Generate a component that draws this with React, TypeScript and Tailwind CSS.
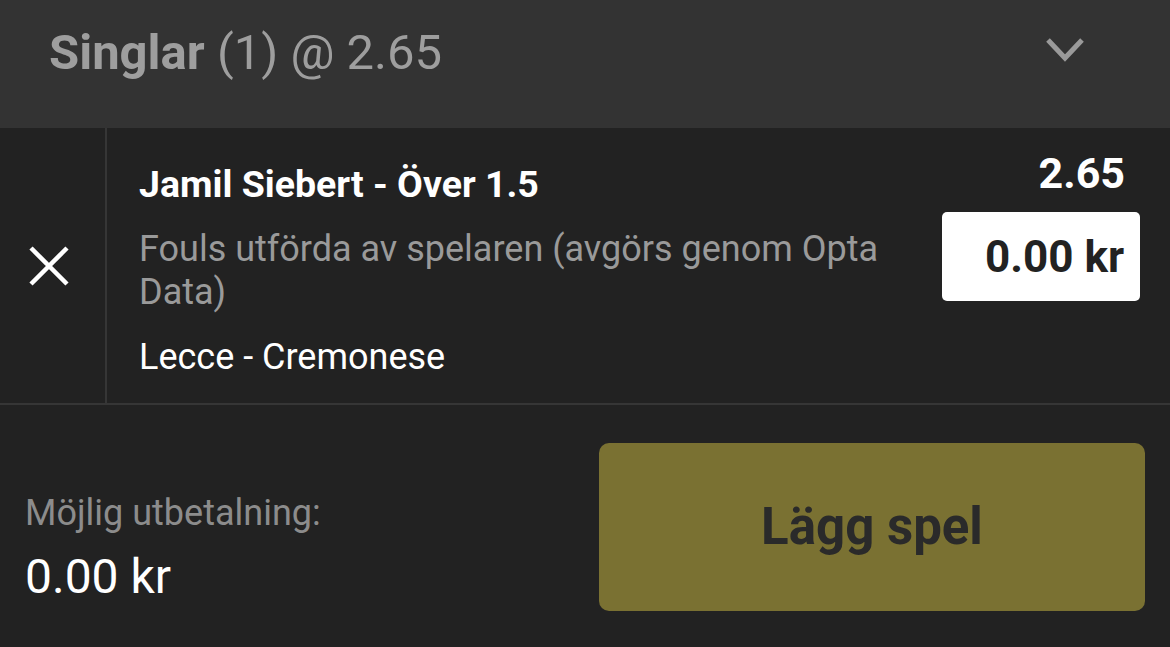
import React from "react";

export default function App() {
  return (
    <div className="w-[1170px] h-[647px] bg-[#222222] overflow-hidden flex flex-col" style={{ fontFamily: "Roboto, 'Noto Sans', sans-serif" }}>
      {/* Header */}
      <div className="h-[128px] shrink-0 bg-[#333333] flex items-start justify-between pl-[49px] pr-[85px] pt-[25px]">
        <div className="text-[49px] leading-[56px] text-[#9e9e9e]">
          <span className="font-bold">Singlar</span> (1) @ 2.65
        </div>
        <svg width="40" height="28" viewBox="0 0 40 28" className="mt-[11px]">
          <polyline points="3,4 20,22 37,4" fill="none" stroke="#9a9a9a" strokeWidth="5" />
        </svg>
      </div>

      {/* Bet row */}
      <div className="h-[277px] shrink-0 flex border-b-2 border-[#363636]">
        <div className="w-[107px] shrink-0 border-r-2 border-[#363636] flex items-center justify-center pr-[8px]">
          <svg width="40" height="40" viewBox="0 0 40 40">
            <line x1="2" y1="2" x2="38" y2="38" stroke="#ffffff" strokeWidth="4.5" />
            <line x1="38" y1="2" x2="2" y2="38" stroke="#ffffff" strokeWidth="4.5" />
          </svg>
        </div>
        <div className="flex-1 flex pl-[32px] pr-[30px]">
          <div className="flex-1 flex flex-col pt-[35px]">
            <div className="text-[37.5px] leading-[42px] font-bold text-white">Jamil Siebert - Över 1.5</div>
            <div className="mt-[23px] text-[36px] leading-[43px] text-[#9a9a9a] max-w-[760px]">
              Fouls utförda av spelaren (avgörs genom Opta Data)
            </div>
            <div className="mt-[22px] text-[36px] leading-[42px] text-white">Lecce - Cremonese</div>
          </div>
          <div className="flex flex-col items-end pt-[20px]">
            <div className="text-[43px] leading-[50px] font-bold text-white pr-[15px]">2.65</div>
            <div className="mt-[14px] w-[198px] h-[89px] bg-white rounded-[5px] flex items-center justify-end pr-[16px]">
              <span className="text-[44px] font-bold text-[#222222]">0.00 kr</span>
            </div>
          </div>
        </div>
      </div>

      {/* Footer */}
      <div className="flex-1 flex items-start justify-between pl-[25px] pr-[25px]">
        <div className="flex flex-col pt-[87px]">
          <div className="text-[36px] leading-[42px] text-[#8c8c8c]">Möjlig utbetalning:</div>
          <div className="mt-[15px] text-[48px] leading-[56px] text-white">0.00 kr</div>
        </div>
        <div className="mt-[38px] w-[546px] h-[168px] rounded-[10px] bg-[#7a7132] flex items-center justify-center">
          <span className="text-[51px] font-bold text-[#2a2a2a]">Lägg spel</span>
        </div>
      </div>
    </div>
  );
}
